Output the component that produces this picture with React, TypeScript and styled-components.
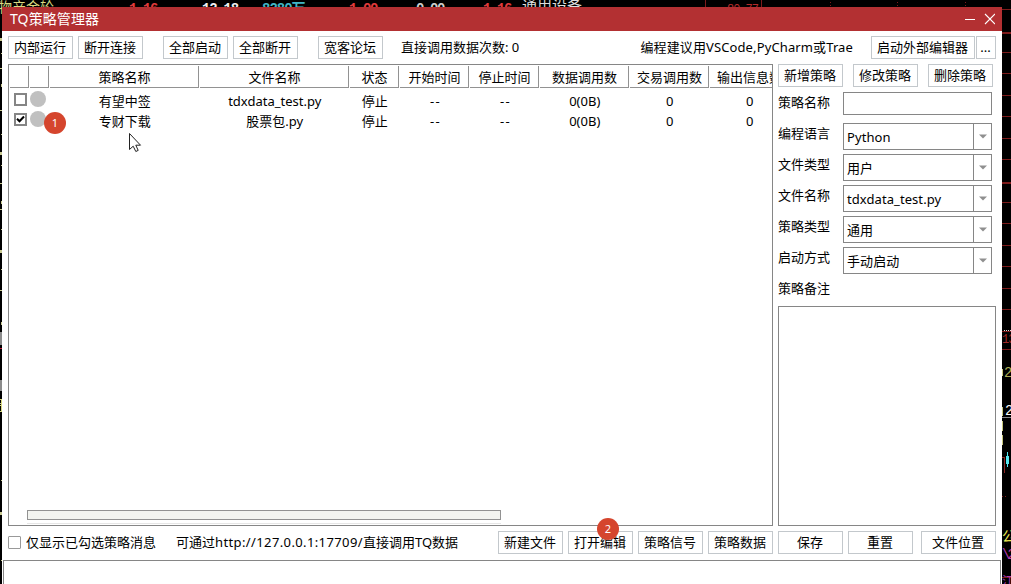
import React from "react";
import styled, { createGlobalStyle } from "styled-components";

const Global = createGlobalStyle`
  * { box-sizing: border-box; }
  body { margin: 0; background: #000; overflow: hidden; }
`;

const Desktop = styled.div`
  position: relative;
  width: 1011px;
  height: 584px;
  padding: 7px 9px 0 2px;
  overflow: hidden;
  background: #000;
  color: #000;
  font: 13px/20px "Noto Sans", "Noto Sans CJK SC", sans-serif;
`;

const Quote = styled.span<{ $x: number; $y: number; $c: string; $size?: number; $ls?: number; $bold?: boolean }>`
  position: absolute;
  left: ${(p) => p.$x}px;
  top: ${(p) => p.$y}px;
  color: ${(p) => p.$c};
  font: ${(p) => (p.$bold ? "bold " : "")}${(p) => p.$size ?? 14}px/16px "Liberation Mono", "Noto Sans CJK SC", monospace;
  letter-spacing: ${(p) => p.$ls ?? 0}px;
  white-space: nowrap;
`;

const ChartLayer = styled.svg`
  position: absolute;
  inset: 0;
`;

const Window = styled.main`
  position: relative;
  display: flex;
  flex-direction: column;
  width: 1000px;
  height: 577px;
  background: #fff;
`;

const TitleBar = styled.header`
  display: flex;
  align-items: center;
  height: 24px;
  padding: 0 7px 0 8px;
  background: #b33032;
  color: #fff;
  font-size: 14px;
  letter-spacing: 0.1px;
  svg { margin-left: auto; }
`;

const Toolbar = styled.div`
  display: flex;
  gap: 5px;
  height: 33px;
  padding: 5px 6px 0;
`;

const Button = styled.button<{ $w?: number; $ml?: number }>`
  flex: none;
  width: ${(p) => p.$w ?? 65}px;
  height: 23px;
  margin: 0 0 0 ${(p) => p.$ml ?? 0}px;
  padding: 0 1px 0 0;
  border: 1px solid #c3c8cc;
  background: #fff;
  color: #000;
  font: inherit;
  line-height: 21px;
  white-space: nowrap;
`;

const Label = styled.span<{ $ml?: number; $ls?: number }>`
  margin-left: ${(p) => p.$ml ?? 0}px;
  letter-spacing: ${(p) => p.$ls ?? 0}px;
  line-height: 22px;
  white-space: nowrap;
`;

const EditorHint = styled(Label)`
  margin-left: auto;
`;

const Url = styled.span`
  letter-spacing: 0.38px;
`;

const Body = styled.div`
  display: flex;
  gap: 5px;
  height: 462px;
  padding: 0 6px;
`;

const TableFrame = styled.section`
  display: flex;
  flex-direction: column;
  width: 765px;
  border: 1px solid #868686;
  overflow: hidden;
`;

const columns = "20px 20px 150px 150px 50px 70px 70px 90px 80px 80px";

const HeadRow = styled.div`
  display: grid;
  grid-template-columns: ${columns};
  grid-template-rows: 22px;
  height: 23px;
  margin-bottom: 3px;
  padding-top: 1px;
`;

const HeadCell = styled.div`
  height: 22px;
  margin-left: 1px;
  padding-left: 1px;
  border-right: 1px solid #929292;
  border-bottom: 1px solid #929292;
  line-height: 23px;
  text-align: center;
  white-space: nowrap;
`;

const Row = styled.div`
  display: grid;
  grid-template-columns: ${columns};
  height: 20px;
`;

const Cell = styled.div<{ $ls?: number }>`
  padding-left: ${(p) => (p.$ls ? 3 : 1.5)}px;
  text-align: center;
  white-space: nowrap;
  letter-spacing: ${(p) => p.$ls ?? 0}px;
`;

const RowCheck = styled.div`
  display: flex;
  width: 13px;
  height: 13px;
  margin: 2px 0 0 5px;
  border: 2px solid #858585;
`;

const StatusDot = styled.div`
  width: 16px;
  height: 16px;
  margin-left: 1px;
  border-radius: 50%;
  background: #c0c0c0;
`;

const ScrollThumb = styled.div`
  width: 474px;
  height: 10px;
  margin: auto 0 3px 18px;
  border: 1px solid #929292;
  background: #f3f4f0;
`;

const ScrollEdge = styled.div`
  width: 474px;
  height: 1px;
  margin: 0 0 1px 18px;
  background: #e6e6e6;
`;

const SidePanel = styled.aside`
  display: flex;
  flex-direction: column;
  width: 218px;
`;

const SideActions = styled.div`
  display: flex;
  gap: 10px;
  height: 28px;
`;

const Field = styled.div<{ $h?: number }>`
  display: flex;
  height: ${(p) => p.$h ?? 31}px;
`;

const FieldLabel = styled.span`
  width: 65px;
`;

const TextInput = styled.div`
  width: 149px;
  height: 23px;
  border: 1px solid #868686;
`;

const Select = styled.div`
  display: flex;
  justify-content: space-between;
  width: 149px;
  height: 27px;
  padding-left: 3px;
  border: 1px solid #868686;
  line-height: 26px;
  letter-spacing: 0.07px;
`;

const Arrow = styled.div`
  display: flex;
  align-items: center;
  justify-content: center;
  width: 18px;
  border-left: 1px solid #868686;
`;

const Note = styled.div`
  flex: 1;
  border: 1px solid #868686;
`;

const Footer = styled.footer`
  display: flex;
  gap: 5px;
  height: 34px;
  padding: 5px 6px 0;
`;

const FooterInfo = styled.div`
  display: flex;
  width: 485px;
`;

const FilterCheck = styled.div`
  width: 13px;
  height: 13px;
  margin: 5px 5px 0 0;
  border: 1px solid #999;
  border-radius: 1px;
`;

const MessagePane = styled.div`
  flex: 1;
  margin: 0 1px;
  border: 1px solid #868686;
  border-bottom: 0;
`;

const Step = styled.div<{ $x: number; $y: number }>`
  position: absolute;
  left: ${(p) => p.$x}px;
  top: ${(p) => p.$y}px;
  width: 22px;
  height: 22px;
  border-radius: 50%;
  background: #d5452d;
  color: #fff;
  font-size: 11px;
  line-height: 22px;
  text-align: center;
`;

const Pointer = styled.svg`
  position: absolute;
  left: 128px;
  top: 132px;
`;

const heads = ["", "", "策略名称", "文件名称", "状态", "开始时间", "停止时间", "数据调用数", "交易调用数", "输出信息数"];

const rows = [
  { checked: false, cells: ["有望中签", "tdxdata_test.py", "停止", "--", "--", "0(0B)", "0", "0"] },
  { checked: true, cells: ["专财下载", "股票包.py", "停止", "--", "--", "0(0B)", "0", "0"] },
];

const selects = [
  ["编程语言", "Python"],
  ["文件类型", "用户"],
  ["文件名称", "tdxdata_test.py"],
  ["策略类型", "通用"],
  ["启动方式", "手动启动"],
];

const gridLines = [9, 32, 52, 73, 95, 116, 138, 159, 182, 202, 223, 245, 266, 288, 309, 331, 349, 577];
const ticks = [38, 53, 68, 84, 110, 134, 152, 165, 183, 201, 209, 229, 250, 269, 290, 322, 403, 480, 512, 560];

export default function App() {
  return (
    <Desktop>
      <Global />
      <ChartLayer width="1011" height="584" shapeRendering="crispEdges">
        {gridLines.map((y) => (
          <rect key={y} x="1002" y={y} width="9" height={y === 32 || y === 182 ? 2 : 1} fill="#7e1b1b" />
        ))}
        <path d="M705.5 0V7M761.5 0V7" stroke="#7e1b1b" />
        <path d="M830.5 2V7M897.5 2V7M965.5 2V7" stroke="#7e1b1b" strokeDasharray="1 2" />
        {ticks.map((y, i) => (
          <rect key={y} x={i % 2} y={y} width="2" height={i % 3 ? 1 : 3} fill="#c8c890" />
        ))}
        <rect x="0" y="332" width="2" height="13" fill="#8c8c8c" />
        <rect x="0" y="348" width="2" height="1" fill="#c02040" />
        <rect x="0" y="380" width="2" height="11" fill="#8c8c8c" />
        <path d="M0 399.500H2M0 405.500H2M0 411.500H2M1.500 399V412" stroke="#d8d880" />
        <path d="M1002.500 369V376M1002.500 407V416M1002.500 421V431M1002.500 435V445" stroke="#c9c97d" />
        <path d="M1002 417.500H1011" stroke="#888" />
        <path d="M1002 457.500H1004V473" stroke="#8b2525" fill="none" />
        <path d="M1007.500 452V467" stroke="#55e5ee" />
        <rect x="1006" y="456" width="3" height="8" fill="#55e5ee" />
        <path d="M1004 330.500H1011" stroke="#ddd" strokeDasharray="1 1" />
        <path d="M1002 496.500H1008" stroke="#7e1b1b" strokeDasharray="1 2" />
      </ChartLayer>
      <Quote $x={-2} $y={0} $c="#d8d880">物产金轮</Quote>
      <Quote $x={129} $y={1} $c="#e03a3a" $bold $ls={-1.4}>1.16</Quote>
      <Quote $x={202} $y={1} $c="#eee" $bold $ls={-1.2}>12.18</Quote>
      <Quote $x={262} $y={1} $c="#40b5c5" $bold $ls={-1}>8280万</Quote>
      <Quote $x={349} $y={1} $c="#e03a3a" $bold $ls={-1.4}>1.00</Quote>
      <Quote $x={416} $y={1} $c="#ccc" $bold $ls={-1.4}>0.00</Quote>
      <Quote $x={483} $y={1} $c="#e03a3a" $bold $ls={-1.4}>1.16</Quote>
      <Quote $x={522} $y={0} $c="#ddd" $size={15}>通用设备</Quote>
      <Quote $x={727} $y={2} $c="#b32b2b" $size={12} $ls={-1}>80.77</Quote>
      <Quote $x={1002} $y={332} $c="#a02828" $size={12} $ls={-1}>13</Quote>
      <Quote $x={1004} $y={365} $c="#adad55">2</Quote>
      <Quote $x={1005} $y={403} $c="#fff">2</Quote>
      <Quote $x={1002} $y={529} $c="#eaea54">公</Quote>
      <Quote $x={1002} $y={547} $c="#b038b0" $ls={-3}>\2</Quote>
      <Quote $x={1002} $y={575} $c="#b038b0" $size={12}>江</Quote>

      <Window>
        <TitleBar>
          TQ策略管理器
          <svg width="31" height="12" viewBox="0 0 31 12" fill="none" stroke="#fff">
            <path d="M1 6.500H11" />
            <path d="M21 1L31 11M31 1L21 11" strokeWidth="1.1" />
          </svg>
        </TitleBar>
        <Toolbar>
          <Button>内部运行</Button>
          <Button>断开连接</Button>
          <Button $ml={15}>全部启动</Button>
          <Button>全部断开</Button>
          <Button $ml={15}>宽客论坛</Button>
          <Label $ml={13}>直接调用数据次数: 0</Label>
          <EditorHint $ls={0.12}>编程建议用VSCode,PyCharm或Trae</EditorHint>
          <Button $w={104} $ml={13}>启动外部编辑器</Button>
          <Button $w={20} $ml={-4}>...</Button>
        </Toolbar>
        <Body>
          <TableFrame>
            <HeadRow>
              {heads.map((h, i) => (
                <HeadCell key={i}>{h}</HeadCell>
              ))}
            </HeadRow>
            {rows.map((r) => (
              <Row key={r.cells[0]}>
                <RowCheck>
                  {r.checked && (
                    <svg width="9" height="9" viewBox="0 0 9 9">
                      <path d="M1 3.800L3.500 6.300L8 1.500" fill="none" stroke="#000" strokeWidth="2" />
                    </svg>
                  )}
                </RowCheck>
                <StatusDot />
                {r.cells.map((c, i) => (
                  <Cell key={i} $ls={c === "--" ? 1.2 : 0}>{c}</Cell>
                ))}
              </Row>
            ))}
            <ScrollThumb />
            <ScrollEdge />
          </TableFrame>
          <SidePanel>
            <SideActions>
              <Button>新增策略</Button>
              <Button>修改策略</Button>
              <Button>删除策略</Button>
            </SideActions>
            <Field>
              <FieldLabel>策略名称</FieldLabel>
              <TextInput />
            </Field>
            {selects.map(([label, value]) => (
              <Field key={label}>
                <FieldLabel>{label}</FieldLabel>
                <Select>
                  {value}
                  <Arrow>
                    <svg width="8" height="5" viewBox="0 0 8 5">
                      <path d="M0 0.500H8L4 4.500Z" fill="#8f8f8f" />
                    </svg>
                  </Arrow>
                </Select>
              </Field>
            ))}
            <Field $h={28}>
              <FieldLabel>策略备注</FieldLabel>
            </Field>
            <Note />
          </SidePanel>
        </Body>
        <Footer>
          <FooterInfo>
            <FilterCheck />
            <Label>仅显示已勾选策略消息</Label>
            <Label $ml={20}>
              可通过<Url>http://127.0.0.1:17709/</Url>直接调用TQ数据
            </Label>
          </FooterInfo>
          <Button>新建文件</Button>
          <Button>打开编辑</Button>
          <Button>策略信号</Button>
          <Button>策略数据</Button>
          <Button>保存</Button>
          <Button>重置</Button>
          <Button $w={75} $ml={3}>文件位置</Button>
        </Footer>
        <MessagePane />
      </Window>

      <Step $x={44} $y={112}>1</Step>
      <Step $x={597} $y={518}>2</Step>
      <Pointer width="14" height="21" viewBox="0 0 14 21">
        <path d="M1.500 1.500V17.500L5.200 14.200L7.800 19.500L10.200 18.400L7.800 13.200H12.500Z" fill="#fff" stroke="#222" />
      </Pointer>
    </Desktop>
  );
}
